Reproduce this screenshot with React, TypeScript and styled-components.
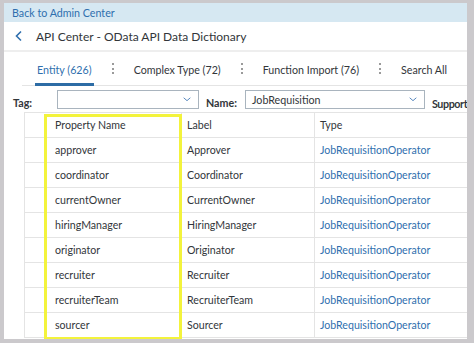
import * as React from 'react';
import styled, { createGlobalStyle } from 'styled-components';

const TEXT_COLOR = '#32363a';
const LINK_COLOR = '#2f6fae';
const LINE_COLOR = '#e4e4e4';

const GlobalStyle = createGlobalStyle`
	html, body {
		margin: 0;
		padding: 0;
		background: #cbc9cc;
		font-family: Lato, 'Open Sans', 'Liberation Sans', sans-serif;
	}
`;

const Frame = styled.div`
	display: flex;
	flex-direction: column;
	margin: 3px 7px 0 4px;
	height: 336px;
	background: #ffffff;
	overflow: hidden;
`;

const BackBar = styled.div`
	height: 19px;
	display: flex;
	align-items: center;
	padding-left: 8px;
	background: #d6e8f2;
	color: ${LINK_COLOR};
	font-size: 10.7px;
`;

const Header = styled.div`
	height: 28px;
	display: flex;
	align-items: center;
	gap: 11px;
	padding-left: 9px;
	border-bottom: 2px solid #eeeeee;
	color: ${TEXT_COLOR};
	font-size: 12px;
`;

const TabBar = styled.div`
	height: 33px;
	display: flex;
	align-items: center;
	padding-left: 15px;
	margin: 0 0 0 18px;
	border-bottom: 1px solid ${LINE_COLOR};
`;

const Tab = styled.div<{ $active?: boolean }>`
	position: relative;
	flex-shrink: 0;
	height: 100%;
	display: flex;
	align-items: center;
	padding-top: 1px;
	white-space: nowrap;
	color: ${(p) => (p.$active ? LINK_COLOR : TEXT_COLOR)};
	font-size: 10.7px;
	&::after {
		content: '';
		position: absolute;
		left: -2px;
		right: -2px;
		bottom: 0;
		height: 3px;
		background: ${(p) => (p.$active ? '#2d6ca5' : 'transparent')};
	}
`;

const TabSep = styled.span`
	flex-shrink: 0;
	width: 0;
	height: 11px;
	margin: 0 20px;
	border-left: 2px dotted #9a9a9a;
`;

const FilterRow = styled.div`
	height: 26px;
	display: flex;
	align-items: center;
	padding-left: 9px;
	color: ${TEXT_COLOR};
	font-size: 10.7px;
	font-weight: 700;
	white-space: nowrap;
`;

const FilterLabel = styled.span<{ $width: number; $drop?: number; $tight?: boolean }>`
	flex-shrink: 0;
	width: ${(p) => p.$width}px;
	padding-top: ${(p) => p.$drop ?? 6}px;
	letter-spacing: ${(p) => (p.$tight ? '-0.4px' : 'normal')};
`;

const Select = styled.div<{ $width: number }>`
	flex-shrink: 0;
	width: ${(p) => p.$width}px;
	height: 19px;
	box-sizing: border-box;
	display: flex;
	align-items: center;
	justify-content: space-between;
	padding: 0 6px 0 6px;
	margin-right: 7px;
	border: 1px solid #a9b4be;
	background: #ffffff;
	color: ${TEXT_COLOR};
	font-weight: 400;
	font-size: 10.7px;
`;

const Table = styled.div`
	position: relative;
	display: grid;
	grid-template-columns: 21px 135px 133px 1fr;
	grid-auto-rows: 25px;
	margin: 0 0 0 20px;
	border-top: 1px solid ${LINE_COLOR};
	border-left: 1px solid ${LINE_COLOR};
`;

const Cell = styled.div<{ $link?: boolean; $divider?: boolean }>`
	display: flex;
	align-items: center;
	padding-left: ${(p) => (p.$divider ? 5 : 9)}px;
	border-bottom: 1px solid ${LINE_COLOR};
	border-left: ${(p) => (p.$divider ? `1px solid ${LINE_COLOR}` : 'none')};
	color: ${(p) => (p.$link ? LINK_COLOR : TEXT_COLOR)};
	font-size: 10.6px;
	white-space: nowrap;
	overflow: hidden;
`;

const Highlight = styled.div`
	position: absolute;
	left: 19px;
	top: 1px;
	width: 138px;
	height: 226px;
	box-sizing: border-box;
	border: 3px solid #f3f33c;
	pointer-events: none;
`;

const Chevron: React.FC<{ dir: 'left' | 'down'; size: number; color: string }> = ({ dir, size, color }) => (
	<svg width={size} height={size} viewBox='0 0 12 12'>
		<path
			d={dir === 'left' ? 'M8 1.5 L3.5 6 L8 10.5' : 'M2 4.5 L6 8 L10 4.5'}
			fill='none'
			stroke={color}
			strokeWidth={dir === 'left' ? 1.6 : 1.2}
		/>
	</svg>
);

const rows = [
	['approver', 'Approver'],
	['coordinator', 'Coordinator'],
	['currentOwner', 'CurrentOwner'],
	['hiringManager', 'HiringManager'],
	['originator', 'Originator'],
	['recruiter', 'Recruiter'],
	['recruiterTeam', 'RecruiterTeam'],
	['sourcer', 'Sourcer'],
];

const App: React.FC = () => (
	<>
		<GlobalStyle />
		<Frame>
			<BackBar>Back to Admin Center</BackBar>
			<Header>
				<Chevron dir='left' size={12} color={LINK_COLOR} />
				<span>API Center - OData API Data Dictionary</span>
			</Header>
			<TabBar>
				<Tab $active>Entity (626)</Tab>
				<TabSep />
				<Tab>Complex Type (72)</Tab>
				<TabSep />
				<Tab>Function Import (76)</Tab>
				<TabSep />
				<Tab>Search All</Tab>
			</TabBar>
			<FilterRow>
				<FilterLabel $width={44}>Tag:</FilterLabel>
				<Select $width={142}>
					<span />
					<Chevron dir='down' size={10} color='#5a8ac0' />
				</Select>
				<FilterLabel $width={39}>Name:</FilterLabel>
				<Select $width={180}>
					<span>JobRequisition</span>
					<Chevron dir='down' size={10} color='#5a8ac0' />
				</Select>
				<FilterLabel $width={38} $drop={9} $tight>Support</FilterLabel>
			</FilterRow>
			<Table>
				<Cell />
				<Cell>Property Name</Cell>
				<Cell $divider>Label</Cell>
				<Cell $divider>Type</Cell>
				{rows.map(([name, label]) => (
					<React.Fragment key={name}>
						<Cell />
						<Cell>{name}</Cell>
						<Cell $divider>{label}</Cell>
						<Cell $divider $link>JobRequisitionOperator</Cell>
					</React.Fragment>
				))}
				<Highlight />
			</Table>
		</Frame>
	</>
);

export default App;
